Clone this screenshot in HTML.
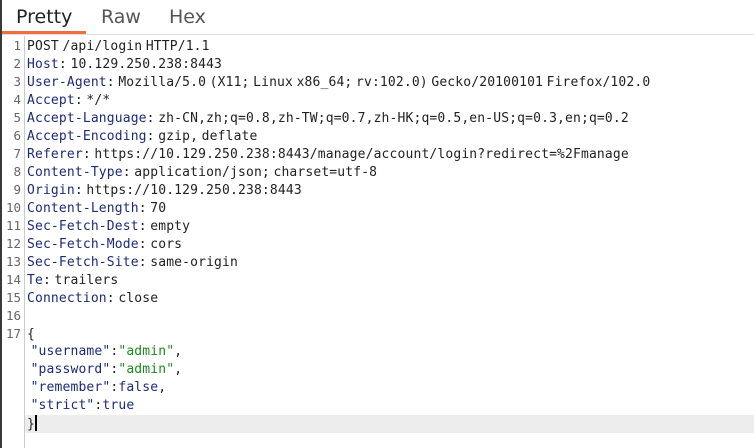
<!DOCTYPE html>
<html><head><style>
body{margin:0;width:754px;height:448px;background:#fff;overflow:hidden;position:relative;font-family:"DejaVu Sans","Liberation Sans",sans-serif}
.bl{position:absolute;left:0;top:0;width:2px;height:448px;background:#3a3a3a}
.tabs{position:absolute;left:0;top:0;width:754px;height:34px;border-bottom:1px solid #ddd}
.tab{position:absolute;top:6px;font-size:19px;color:#555}
.ul{position:absolute;left:2px;top:31px;width:84px;height:3px;background:#f26d3d}
.gut{position:absolute;left:24px;top:36px;width:1px;height:412px;background:#ccc}
.code{position:absolute;left:0;top:37px;font-family:"DejaVu Sans Mono","Liberation Mono",monospace;font-size:13px;line-height:18px;white-space:pre;color:#222;word-spacing:-4.4px;letter-spacing:0.15px}
.r{height:18px;position:relative}
.n{display:inline-block;width:21px;text-align:right;color:#666;margin-right:6px;font-size:12.5px;letter-spacing:0}
.k{color:#1c2a7a}.s{color:#1d8a1d}
.hl{position:absolute;left:25px;top:415px;width:729px;height:18px;background:#ededed}
.cur{display:inline-block;width:2px;height:16px;background:#000;vertical-align:-3px}
</style></head><body>
<div class="hl"></div>
<div class="tabs"><span class="tab" style="left:16px;color:#222">Pretty</span><span class="tab" style="left:101px">Raw</span><span class="tab" style="left:169px">Hex</span></div>
<div class="ul"></div>
<div class="gut"></div>
<div class="bl"></div>
<div class="code"><div class="r"><span class="n">1</span>POST /api/login HTTP/1.1</div><div class="r"><span class="n">2</span><span class="k">Host</span>: 10.129.250.238:8443</div><div class="r"><span class="n">3</span><span class="k">User-Agent</span>: Mozilla/5.0 (X11; Linux x86_64; rv:102.0) Gecko/20100101 Firefox/102.0</div><div class="r"><span class="n">4</span><span class="k">Accept</span>: */*</div><div class="r"><span class="n">5</span><span class="k">Accept-Language</span>: zh-CN,zh;q=0.8,zh-TW;q=0.7,zh-HK;q=0.5,en-US;q=0.3,en;q=0.2</div><div class="r"><span class="n">6</span><span class="k">Accept-Encoding</span>: gzip, deflate</div><div class="r"><span class="n">7</span><span class="k">Referer</span>: https://10.129.250.238:8443/manage/account/login?redirect=%2Fmanage</div><div class="r"><span class="n">8</span><span class="k">Content-Type</span>: application/json; charset=utf-8</div><div class="r"><span class="n">9</span><span class="k">Origin</span>: https://10.129.250.238:8443</div><div class="r"><span class="n">10</span><span class="k">Content-Length</span>: 70</div><div class="r"><span class="n">11</span><span class="k">Sec-Fetch-Dest</span>: empty</div><div class="r"><span class="n">12</span><span class="k">Sec-Fetch-Mode</span>: cors</div><div class="r"><span class="n">13</span><span class="k">Sec-Fetch-Site</span>: same-origin</div><div class="r"><span class="n">14</span><span class="k">Te</span>: trailers</div><div class="r"><span class="n">15</span><span class="k">Connection</span>: close</div><div class="r"><span class="n">16</span></div><div class="r"><span class="n">17</span>{</div><div class="r"><span class="n"></span> <span class="k">"username"</span>:<span class="s">"admin"</span>,</div><div class="r"><span class="n"></span> <span class="k">"password"</span>:<span class="s">"admin"</span>,</div><div class="r"><span class="n"></span> <span class="k">"remember"</span>:<span class="k">false</span>,</div><div class="r"><span class="n"></span> <span class="k">"strict"</span>:<span class="k">true</span></div><div class="r"><span class="n"></span>}<span class="cur"></span></div></div>
</body></html>
